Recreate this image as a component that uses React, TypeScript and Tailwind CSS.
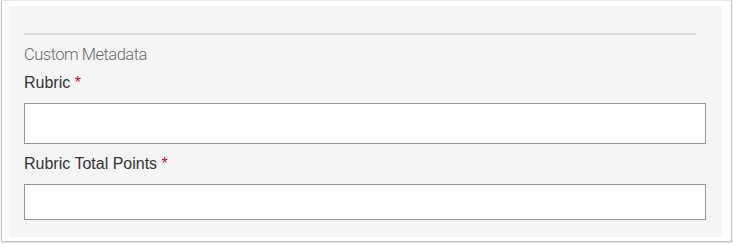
export default function App() {
  const label = "text-[16px] leading-[20px] h-[20px] text-[#333333]";
  const sans = { fontFamily: '"Helvetica Neue", "Liberation Sans", Arial, sans-serif' };

  return (
    <div className="w-[733px] h-[244px] bg-white" style={sans}>
      <div className="ml-[1px] w-[731px] h-[242px] border border-[#c4c4c4] border-t-[#e6e6e6] bg-white pl-[7px] pr-[9px] pt-[5px] pb-[4px] shadow-[0_1px_2px_rgba(0,0,0,0.15)]">
        <div className="h-full bg-[#f5f5f5] pl-[15px] pr-[16px] pt-[27px]">
          <div className="h-[2px] bg-[#d9d9d9] mr-[10px]" />

          <div
            className="mt-[10px] h-[20px] text-[16.5px] leading-[20px] font-light tracking-[-0.5px] text-[#6a6a6a]"
            style={{ fontFamily: 'Roboto, "Liberation Sans", sans-serif' }}
          >
            Custom Metadata
          </div>

          <label className={`mt-[8px] block ${label}`}>
            Rubric <span className="text-[#d0021b]">*</span>
          </label>
          <input
            type="text"
            className="mt-[10px] block w-full h-[41px] border border-[#949494] bg-white outline-none"
          />

          <label className={`mt-[10px] block ${label}`}>
            Rubric Total Points <span className="text-[#d0021b]">*</span>
          </label>
          <input
            type="text"
            className="mt-[10px] block w-full h-[36px] border border-[#949494] bg-white outline-none"
          />
        </div>
      </div>
    </div>
  );
}
